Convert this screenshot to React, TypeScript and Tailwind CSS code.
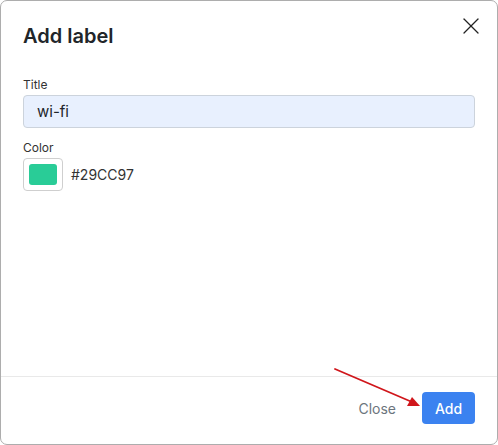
import { X } from "lucide-react";

function Arrow() {
    return (
        <svg className="absolute left-[330px] top-[364px]" width="100" height="50" viewBox="0 0 100 50">
            <line x1="5" y1="5" x2="82" y2="38" stroke="#d0161b" strokeWidth="1.8" strokeLinecap="round" />
            <polygon points="90,42 77,42 82,33" fill="#d0161b" />
        </svg>
    )
}

export default function App() {
    return (
        <div className="relative w-[498px] h-[445px] bg-white font-['Inter',sans-serif] text-[#212529]">
            <div className="flex flex-col h-full border border-[#adadad] rounded-[7px] overflow-hidden">
                <div className="flex items-start justify-between pl-[22px] pr-[12px] pt-[22px]">
                    <h2 className="text-[20px] font-semibold leading-[26px]">Add label</h2>
                    <button className="mt-[-11px] text-[#222]">
                        <X size={28} strokeWidth={1.1} />
                    </button>
                </div>
                <div className="flex flex-col px-[22px] pt-[28px] flex-1">
                    <label className="text-[12px] leading-[16px] text-[#333]">Title</label>
                    <input
                        readOnly
                        value="wi-fi"
                        className="mt-[2px] h-[33px] w-full rounded-[4px] border border-[#ccd3dc] bg-[#e8f0fe] pl-[13px] text-[15px] text-[#212529] outline-none"
                    />
                    <label className="mt-[12px] text-[12px] leading-[16px] text-[#333]">Color</label>
                    <div className="mt-[2px] flex items-center gap-[8px]">
                        <div className="w-[40px] h-[33px] rounded-[4px] border border-[#cfcfcf] flex items-center justify-center">
                            <div className="w-[28px] h-[21px] rounded-[3px] bg-[#29cc97]" />
                        </div>
                        <span className="text-[14px] text-[#333]">#29CC97</span>
                    </div>
                </div>
                <div className="border-t border-[#e9e9e9] flex items-center justify-end gap-[14px] pl-[22px] pr-[22px] pt-[15px] pb-[20px]">
                    <button className="px-[12px] h-[32px] text-[14px] text-[#6c757d]">Close</button>
                    <button className="w-[53px] h-[32px] rounded-[4px] bg-[#3b82f0] text-white text-[14px] font-medium">Add</button>
                </div>
            </div>
            <Arrow />
        </div>
    )
}
